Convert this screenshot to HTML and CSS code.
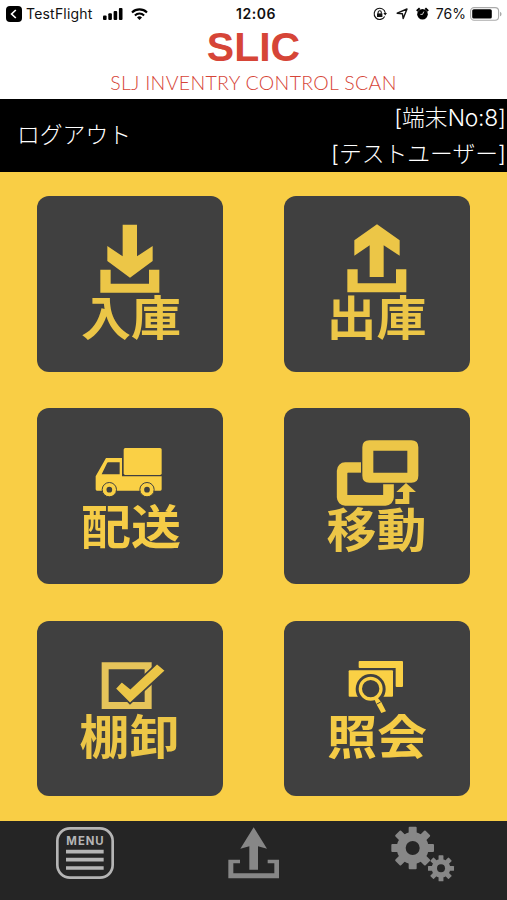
FILE: index.html
```
<!DOCTYPE html>
<html lang="ja">
<head>
    <meta charset="UTF-8">
    <meta name="viewport" content="width=device-width, initial-scale=1.0">
    <title>SLIC</title>
    <link rel="stylesheet" href="styles.css">
</head>
<body>
<div class="status-bar">
    <div class="status-left">
        <svg class="back-icon" width="16" height="16" viewBox="0 0 16 16"><rect width="16" height="16" rx="4"/><path d="M9.8 4 5.6 8l4.2 4" fill="none" stroke="#fff" stroke-width="1.7"/></svg>
        <span class="app-name">TestFlight</span>
        <svg class="signal-icon" width="20" height="12" viewBox="0 0 20 12"><rect y="7.5" width="3.6" height="4.5" rx="1"/><rect x="5.3" y="5.3" width="3.6" height="6.7" rx="1"/><rect x="10.6" y="3" width="3.6" height="9" rx="1"/><rect x="15.9" width="3.6" height="12" rx="1"/></svg>
        <svg width="17" height="12" viewBox="0 0 17 12" fill="none" stroke="#000" stroke-width="2.1"><path d="M1 4.4a10.8 10.8 0 0 1 15 0M3.9 7.4a6.7 6.7 0 0 1 9.2 0"/><path d="M8.5 12 6 9.4a3.7 3.7 0 0 1 5 0z" fill="#000" stroke="none"/></svg>
    </div>
    <div class="clock">12:06</div>
    <div class="status-right">
        <svg class="lock-icon" width="14" height="14" viewBox="0 0 14 14" fill="none" stroke="#111" stroke-width="1.1"><path d="M11.7 9.5A5.6 5.6 0 1 1 12.3 6"/><path d="M10.4 6h3.6l-1.8 2.5z" fill="#111" stroke="none"/><path d="M5.1 6.8V5.4a1.6 1.6 0 0 1 3.2 0v1.4"/><rect x="4" y="6.4" width="5.4" height="3.6" fill="#111" stroke="none"/></svg>
        <svg class="location-icon" width="12" height="12" viewBox="0 0 12 12"><path d="M11 1 7.2 10.6 6.4 5.7 1.2 5.2z" fill="none" stroke="#111" stroke-width="1.4" stroke-linejoin="round"/></svg>
        <svg class="alarm-icon" width="13" height="13" viewBox="0 0 13 13"><circle cx="6.5" cy="7.2" r="5.3"/><path d="M.8 4 3.7 1.2M12.2 4 9.3 1.2" stroke="#000" stroke-width="2"/><path d="M7.8 4.6 6.5 7.4H4.4" fill="none" stroke="#fff" stroke-width=".8"/></svg>
        <span class="battery-text">76%</span>
        <svg width="32" height="14" viewBox="0 0 32 14"><rect x=".6" y=".6" width="28" height="12.6" rx="3.5" fill="none" stroke="#aaa" stroke-width="1.1"/><rect x="2.2" y="2.2" width="19.6" height="9.4" rx="1.6"/><path d="M30 4.7c2 .8 2 3.8 0 4.6z" fill="#aaa"/></svg>
    </div>
</div>

<header class="title-bar">
    <h1>SLIC</h1>
    <p>SLJ INVENTRY CONTROL SCAN</p>
</header>

<div class="user-bar">
    <a class="logout">ログアウト</a>
    <div class="user-info">
        <div>[端末<span class="terminal">No:8</span>]</div>
        <div>[テストユーザー]</div>
    </div>
</div>

<main class="menu">
    <!-- 入庫 -->
    <button class="tile">
        <svg width="186" height="94" viewBox="22 18 558 282">
            <path d="M279 104h43v95l47-31v45l-68 50-68-50v-45l46 31z"/>
            <path d="M212 239h31v42h115v-42h31v69H212z"/>
        </svg>
        <span class="shift-right">入庫</span>
    </button>
    <!-- 出庫 -->
    <button class="tile">
        <svg width="186" height="94" viewBox="22 18 558 282">
            <path d="M301 103l68 48v46l-48-31v95h-42v-95l-46 31v-46z"/>
            <path d="M212 238h31v42h115v-42h31v69H212z"/>
        </svg>
        <span>出庫</span>
    </button>
    <!-- 配送 -->
    <button class="tile bright">
        <svg width="186" height="91" viewBox="22 18 558 273">
            <rect x="282" y="138" width="114" height="81" rx="5"/>
            <path fill-rule="evenodd" d="M229 168h48v55h119v39q0 4-4 4H202q-4 0-4-4v-39zM236 181q-3 0-4 3l-16 33h54v-36z"/>
            <circle cx="239" cy="263" r="21.5" stroke="#404040" stroke-width="3"/>
            <circle cx="352" cy="263" r="21.5" stroke="#404040" stroke-width="3"/>
            <circle class="hole" cx="239" cy="263" r="8.5"/>
            <circle class="hole" cx="352" cy="263" r="8.5"/>
        </svg>
        <span class="shift-right">配送</span>
    </button>
    <!-- 移動 -->
    <button class="tile">
        <svg width="186" height="94" viewBox="22 18 558 282">
            <rect x="196.500" y="197" width="139" height="98" rx="9" fill="none" stroke="#ecc647" stroke-width="32"/>
            <rect class="hole" x="253" y="110" width="176" height="137" rx="24"/>
            <path fill-rule="evenodd" d="M278 115h126q21 0 21 21v85q0 21-21 21H278q-21 0-21-21v-85q0-21 21-21zM290 146v66h102v-66z"/>
            <path class="hole" d="M352 244h34v64h-34z"/>
            <path d="M388 243l30 27h-20v36h-42v-15h23v-21h-20z"/>
            <rect class="hole" x="213" y="212" width="40" height="67"/>
        </svg>
        <span>移動</span>
    </button>
    <!-- 棚卸 -->
    <button class="tile">
        <svg width="186" height="88" viewBox="22 18 558 264">
            <path class="soft" fill-rule="evenodd" d="M216 142h150v140H216zM237 163v98h108v-98z"/>
            <path d="M256 221l20-22 26 21 80-75 26 22-107 99z" stroke="#404040" stroke-width="5"/>
        </svg>
        <span class="shift-left">棚卸</span>
    </button>
    <!-- 照会 -->
    <button class="tile bright">
        <svg width="186" height="88" viewBox="22 18 558 264">
            <path d="M249 138h127q3 0 3 3v72q0 3-3 3h-16q-3 0-3-3v-54H249q-3 0-3-3v-15q0-3 3-3z"/>
            <rect x="216" y="166" width="133" height="79" rx="3"/>
            <circle class="hole" cx="282" cy="222" r="45"/>
            <circle cx="282" cy="221" r="31" fill="none" stroke="#fad045" stroke-width="10"/>
            <path d="M293 252l9-5 12 15 14 27-14 5-15-27z"/>
            <path d="M299 268l13-7" stroke="#404040" stroke-width="3"/>
        </svg>
        <span class="shift-right">照会</span>
    </button>
</main>

<footer class="tab-bar">
    <svg width="58" height="53" viewBox="78 38 174 159">
        <rect x="82" y="42" width="166" height="148" rx="38" fill="none" stroke="#b5b5b5" stroke-width="8"/>
        <text class="menu-text" x="165" y="92" textLength="112">MENU</text>
        <path d="M108 112h113M108 136h113M108 161h113" stroke="#b5b5b5" stroke-width="11"/>
    </svg>
    <svg width="52" height="53" viewBox="594 38 156 159" fill="#878787">
        <path d="M671 39l40 64-27-7v70h-26V96l-27 7z"/>
        <path d="M595 136h35v11h-20v30h123v-30h-20v-11h34v56H595z"/>
    </svg>
    <svg class="gear-icon" width="64" height="56" viewBox="412 32 192 168" fill="#878787">
        <circle cx="477" cy="98" r="48"/>
        <g id="teeth">
            <rect x="465" y="34" width="24" height="128" rx="3"/>
            <rect x="465" y="34" width="24" height="128" rx="3" transform="rotate(45 477 98)"/>
            <rect x="465" y="34" width="24" height="128" rx="3" transform="rotate(90 477 98)"/>
            <rect x="465" y="34" width="24" height="128" rx="3" transform="rotate(135 477 98)"/>
        </g>
        <circle class="bar-hole" cx="477" cy="98" r="21"/>
        <circle cx="562" cy="159" r="28"/>
        <use href="#teeth" transform="translate(562 159) scale(.61) translate(-477 -98)"/>
        <circle class="bar-hole" cx="562" cy="159" r="12"/>
    </svg>
</footer>
</body>
</html>
```
FILE: styles.css
```
* {
    box-sizing: border-box;
}
body {
    margin: 0;
    height: 900px;
    display: flex;
    flex-direction: column;
    background-color: #fff;
    font-family: Inter, "Noto Sans CJK JP", sans-serif;
    overflow: hidden;
}
svg {
    display: block;
    flex: none;
    overflow: visible;
}
/* status bar */
.status-bar {
    height: 28px;
    padding: 0 5px 1px 6px;
    display: grid;
    grid-template-columns: 1fr auto 1fr;
    align-items: center;
    font-size: 14px;
    color: #111;
}
.status-left, .status-right {
    display: flex;
    align-items: center;
}
.status-right {
    justify-content: flex-end;
}
.app-name {
    margin: 0 10px 0 4px;
    letter-spacing: 0.2px;
}
.signal-icon {
    margin-right: 8px;
}
.clock {
    padding-left: 4px;
    font-weight: 600;
    letter-spacing: 0.5px;
}
.lock-icon {
    margin-right: 9px;
}
.location-icon {
    margin-right: 8px;
}
.alarm-icon {
    margin-right: 7px;
}
.battery-text {
    margin-right: 4px;
}
/* title */
.title-bar {
    height: 71px;
    text-align: center;
    color: #d64537;
}
.title-bar h1 {
    margin: 0;
    font: bold 41px/38px "Liberation Sans", sans-serif;
}
.title-bar p {
    margin: 5px 0 0;
    font: 300 19.5px/24px Lato, sans-serif;
    letter-spacing: 0.32px;
}
/* login info */
.user-bar {
    height: 73px;
    padding: 0 1px 0 17px;
    display: flex;
    justify-content: space-between;
    align-items: center;
    background-color: #000;
    color: #fff;
    font-size: 22.8px;
    font-weight: 300;
}
.logout {
    padding-bottom: 4px;
}
.user-info {
    text-align: right;
    line-height: 36px;
}
.terminal {
    letter-spacing: -0.2px;
}
/* main menu */
.menu {
    flex: 1;
    padding: 24.3px 37.4px 0;
    display: grid;
    grid-template-columns: 186px 186px;
    grid-auto-rows: 175.8px;
    justify-content: space-between;
    align-content: start;
    row-gap: 36.4px;
    background-color: #f9ce45;
}
.tile {
    display: flex;
    flex-direction: column;
    align-items: center;
    padding: 0;
    border: none;
    border-radius: 12px;
    background-color: #404040;
    color: #ecc647;
    fill: #ecc647;
    font: 700 50px/50px "Noto Sans CJK JP", sans-serif;
    cursor: pointer;
}
/* labels are slightly flattened */
.tile span {
    transform: scaleY(0.93);
}
.bright {
    color: #f5cc46;
    fill: #fad045;
}
.soft {
    fill: #e6c45a;
}
.hole {
    fill: #404040;
}
.shift-right {
    padding-left: 1px;
}
.shift-left {
    padding-right: 2px;
}
/* bottom tabs */
.tab-bar {
    height: 79.5px;
    padding-top: 6.5px;
    display: grid;
    grid-template-columns: repeat(3, 1fr);
    justify-items: center;
    background-color: #252525;
}
.menu-text {
    font: bold 34px Inter, sans-serif;
    text-anchor: middle;
    fill: #b5b5b5;
}
.gear-icon {
    margin-top: -1px;
}
.bar-hole {
    fill: #252525;
}
```
